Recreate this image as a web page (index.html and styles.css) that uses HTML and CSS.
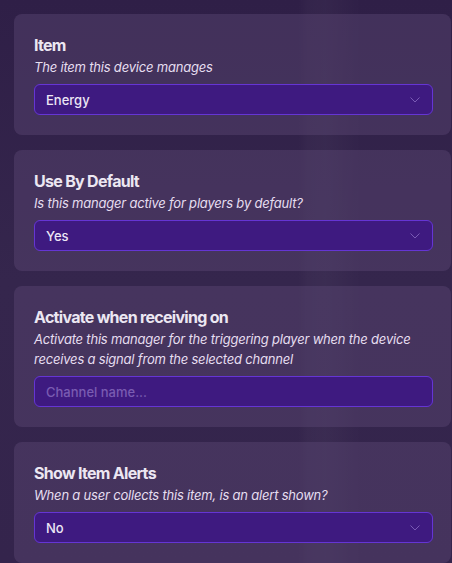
FILE: index.html
```html
<!DOCTYPE html>
<html lang="en">
<head>
<meta charset="utf-8">
<title>Item Manager Options</title>
<link rel="stylesheet" href="styles.css">
</head>
<body>
<main class="panel">
  <section class="card">
    <h2 class="card-title">Item</h2>
    <p class="card-desc">The item this device manages</p>
    <div class="select">
      <span class="select-value">Energy</span>
      <svg class="chevron" viewBox="0 0 10 6" width="10" height="6"><path d="M0.5 0.5 L5 5 L9.5 0.5" fill="none" stroke="currentColor" stroke-width="1"/></svg>
    </div>
  </section>
  <section class="card">
    <h2 class="card-title">Use By Default</h2>
    <p class="card-desc">Is this manager active for players by default?</p>
    <div class="select">
      <span class="select-value">Yes</span>
      <svg class="chevron" viewBox="0 0 10 6" width="10" height="6"><path d="M0.5 0.5 L5 5 L9.5 0.5" fill="none" stroke="currentColor" stroke-width="1"/></svg>
    </div>
  </section>
  <section class="card">
    <h2 class="card-title">Activate when receiving on</h2>
    <p class="card-desc">Activate this manager for the triggering player when the device receives a signal from the selected channel</p>
    <input class="text-input" type="text" placeholder="Channel name...">
  </section>
  <section class="card">
    <h2 class="card-title">Show Item Alerts</h2>
    <p class="card-desc">When a user collects this item, is an alert shown?</p>
    <div class="select">
      <span class="select-value">No</span>
      <svg class="chevron" viewBox="0 0 10 6" width="10" height="6"><path d="M0.5 0.5 L5 5 L9.5 0.5" fill="none" stroke="currentColor" stroke-width="1"/></svg>
    </div>
  </section>
</main>
</body>
</html>
```
FILE: styles.css
```css
html, body {
  margin: 0;
  height: 100%;
}
body {
  font-family: Inter, "Noto Sans", "Liberation Sans", sans-serif;
  background:
    linear-gradient(90deg, rgba(0,0,0,0) 0%, rgba(0,0,0,0) 66%, rgba(255,255,255,0.025) 68%, rgba(255,255,255,0.03) 72%, rgba(0,0,0,0) 80%),
    linear-gradient(180deg, #2f1f47 0%, #35264d 50%, #34244c 100%);
  overflow: hidden;
}
.panel {
  display: flex;
  flex-direction: column;
  gap: 15px;
  padding: 14px 1px 0 14px;
}
.card {
  background: rgba(90, 70, 115, 0.45);
  border-radius: 8px;
  padding: 19px 18px 20px 20px;
  display: flex;
  flex-direction: column;
}
.card-title {
  margin: 0;
  font-size: 16px;
  line-height: 24px;
  font-weight: 700;
  letter-spacing: -0.7px;
  color: #ece7f2;
}
.card-desc {
  margin: 0 0 7px;
  font-size: 13px;
  line-height: 20px;
  font-style: italic;
  letter-spacing: -0.2px;
  color: #e6def0;
}
.select, .text-input {
  box-sizing: border-box;
  height: 31px;
  background: #3e1a80;
  border: 1px solid #6535d4;
  border-radius: 6px;
  display: flex;
  align-items: center;
  justify-content: space-between;
  padding: 0 12px 0 11px;
  font-family: inherit;
  font-size: 13px;
  font-weight: 500;
  color: #ece6f5;
}
.text-input {
  width: 100%;
  outline: none;
}
.text-input::placeholder {
  color: #7a5cb2;
}
.chevron {
  color: #7a5bb5;
}
```
